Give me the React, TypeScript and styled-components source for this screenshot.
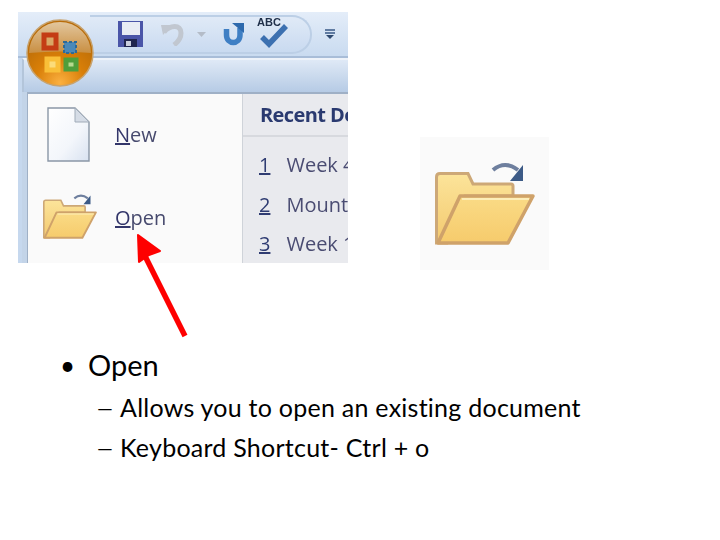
import React from 'react';
import styled, { createGlobalStyle } from 'styled-components';

const GlobalStyle = createGlobalStyle`
  html, body {
    margin: 0;
    padding: 0;
    background: #fff;
  }
`;

const FolderIcon: React.FC<{ width: number }> = ({ width }) => (
  <svg width={width} viewBox="0 0 100 83" style={{ display: 'block' }}>
    <defs>
      <linearGradient id="folderBack" x1="0" y1="0" x2="0" y2="1">
        <stop offset="0" stopColor="#fce49a" />
        <stop offset="1" stopColor="#f3c96f" />
      </linearGradient>
      <linearGradient id="folderFront" x1="0" y1="0" x2="0" y2="1">
        <stop offset="0" stopColor="#fadb86" />
        <stop offset="1" stopColor="#f6cb6c" />
      </linearGradient>
    </defs>
    <path
      d="M1.5 81 V15 Q1.5 11.5 5 11.5 H33 L38 22 H76 Q78 22 78 24 V34 H30 L12 81 Z"
      fill="url(#folderBack)"
      stroke="#cda877"
      strokeWidth="3"
    />
    <path d="M9 77 L25 36 H29 L13 77 Z" fill="#fff0bd" />
    <path
      d="M25 34 H98 L73 81 H3 Z"
      fill="url(#folderFront)"
      stroke="#cfa26a"
      strokeWidth="3.5"
      strokeLinejoin="round"
    />
    <path d="M27 37 H94" stroke="#fdeeb9" strokeWidth="2" />
    <path
      d="M58 8 Q70 -2 83 8"
      fill="none"
      stroke="#55698d"
      strokeWidth="4"
      opacity="0.85"
    />
    <path d="M88 3 V19 H75 Z" fill="#3c5a86" />
  </svg>
);

const OfficeOrb: React.FC = () => (
  <svg width="68" height="68" viewBox="0 0 68 68">
    <defs>
      <radialGradient id="orbBody" cx="0.5" cy="0.95" r="0.75">
        <stop offset="0" stopColor="#fbb040" />
        <stop offset="0.5" stopColor="#d97f08" />
        <stop offset="1" stopColor="#b96c08" />
      </radialGradient>
      <linearGradient id="orbTop" x1="0" y1="0" x2="0" y2="1">
        <stop offset="0" stopColor="#e2c69d" />
        <stop offset="1" stopColor="#c98f42" />
      </linearGradient>
    </defs>
    <circle cx="34" cy="34" r="33" fill="url(#orbBody)" stroke="#c7a36f" strokeWidth="1.5" />
    <path d="M3 34 A31 31 0 0 1 65 34 Q34 31 3 34 Z" fill="url(#orbTop)" />
    <rect x="18" y="16" width="12" height="13" fill="#d9a765" stroke="#c43c14" strokeWidth="5" />
    <rect x="38" y="23" width="12" height="11" fill="#4c89b8" stroke="#2f6a96" strokeWidth="2" strokeDasharray="3 2" />
    <rect x="21" y="40" width="11" height="11" fill="#fbdc7a" stroke="#f9bf38" strokeWidth="5" />
    <rect x="40" y="41" width="10" height="9" fill="#b7d98e" stroke="#4f9e3a" strokeWidth="5" />
  </svg>
);

const SaveIcon: React.FC = () => (
  <svg width="25" height="26" viewBox="0 0 25 26">
    <rect width="25" height="26" fill="#4a55a8" />
    <rect x="4" y="1" width="18" height="13" fill="#e8ecf4" />
    <rect x="6" y="18" width="13" height="8" fill="#20264f" />
    <rect x="8" y="20" width="5" height="5" fill="#c9cede" />
  </svg>
);

const UndoIcon: React.FC = () => (
  <svg width="25" height="24" viewBox="0 0 25 24">
    <path
      d="M4 10 C10 3 21 2 21 11 C21 17 18 20 14 23"
      fill="none"
      stroke="#c1c7d0"
      strokeWidth="5"
    />
    <path d="M1 3 L12 3 L3 13 Z" fill="#c1c7d0" />
  </svg>
);

const DropCaret: React.FC = () => (
  <svg width="9" height="5" viewBox="0 0 9 5">
    <path d="M0 0 H9 L4.5 5 Z" fill="#b4bcc8" />
  </svg>
);

const RedoIcon: React.FC = () => (
  <svg width="21" height="24" viewBox="0 0 21 24">
    <path
      d="M3.5 7 V13 C3.5 23 17 23 17 13 V6"
      fill="none"
      stroke="#3f7fc4"
      strokeWidth="5.5"
    />
    <path d="M9 1 H21 V11 Z" fill="#2d69ad" />
  </svg>
);

const SpellIcon: React.FC = () => (
  <svg width="33" height="28" viewBox="0 0 33 28">
    <path
      d="M6 17 L13 24 L30 6"
      fill="none"
      stroke="#3c70b0"
      strokeWidth="5.5"
    />
  </svg>
);

const CustomizeIcon: React.FC = () => (
  <svg width="10" height="10" viewBox="0 0 10 10">
    <path d="M0 1 H10 M0 4 H10" stroke="#3a5a86" strokeWidth="1.6" />
    <path d="M1 6 H9 L5 10 Z" fill="#2f4a70" />
  </svg>
);

const NewDocIcon: React.FC = () => (
  <svg width="43" height="55" viewBox="0 0 43 55">
    <defs>
      <linearGradient id="docFill" x1="0" y1="0" x2="1" y2="1">
        <stop offset="0" stopColor="#ffffff" />
        <stop offset="0.6" stopColor="#f3f6fb" />
        <stop offset="1" stopColor="#d8e2f0" />
      </linearGradient>
    </defs>
    <path d="M1 1 H28 L42 15 V54 H1 Z" fill="url(#docFill)" stroke="#8a97a6" strokeWidth="1.4" />
    <path d="M28 1 V15 H42 Z" fill="#d5dce6" stroke="#a0abb8" strokeWidth="1" />
  </svg>
);

const RedArrow: React.FC = () => (
  <ArrowOverlay viewBox="0 0 60 110" width="60" height="110">
    <path d="M55 104 L15 24" stroke="#fe0000" strokeWidth="5.5" />
    <path
      d="M8 3 L30 19 L19 23 L9 30 Z"
      fill="#fe0000"
      stroke="#fe0000"
      strokeWidth="2"
      strokeLinejoin="round"
    />
  </ArrowOverlay>
);

const App: React.FC = () => {
  return (
    <Slide>
      <GlobalStyle />
      <TopRow>
        <MenuShot>
          <TitleBar>
            <QuickAccess>
              <Tool $left={0}>
                <SaveIcon />
              </Tool>
              <Tool $left={17}>
                <UndoIcon />
              </Tool>
              <Tool $left={12}>
                <DropCaret />
              </Tool>
              <Tool $left={17}>
                <RedoIcon />
              </Tool>
              <SpellButton>
                <SpellLabel>ABC</SpellLabel>
                <SpellIcon />
              </SpellButton>
            </QuickAccess>
            <CustomizeIcon />
          </TitleBar>
          <Ribbon />
          <MenuBody>
            <Commands>
              <CommandRow>
                <CommandIcon $inset={25}>
                  <NewDocIcon />
                </CommandIcon>
                <CommandLabel>
                  <u>N</u>ew
                </CommandLabel>
              </CommandRow>
              <CommandRow $open>
                <CommandIcon $inset={18}>
                  <FolderIcon width={54} />
                </CommandIcon>
                <CommandLabel $raised>
                  <u>O</u>pen
                </CommandLabel>
              </CommandRow>
            </Commands>
            <Recent>
              <RecentTitle>Recent Documents</RecentTitle>
              <RecentList>
                <RecentItem>
                  <u>1</u>
                  <span>Week 4</span>
                </RecentItem>
                <RecentItem>
                  <u>2</u>
                  <span>Mountain</span>
                </RecentItem>
                <RecentItem>
                  <u>3</u>
                  <span>Week 1</span>
                </RecentItem>
              </RecentList>
            </Recent>
          </MenuBody>
          <OrbSlot>
            <OfficeOrb />
          </OrbSlot>
        </MenuShot>
        <FolderTile>
          <FolderIcon width={100} />
        </FolderTile>
      </TopRow>
      <RedArrow />
      <Bullets>
        <Bullet>Open</Bullet>
        <SubBullet>Allows you to open an existing document</SubBullet>
        <SubBullet>Keyboard Shortcut- Ctrl + o</SubBullet>
      </Bullets>
    </Slide>
  );
};

const Slide = styled.div`
  position: relative;
  width: 720px;
  height: 540px;
  overflow: hidden;
  background: #fff;
  padding: 12px 0 0 18px;
  box-sizing: border-box;
`;

const TopRow = styled.div`
  display: flex;
  align-items: flex-start;
  gap: 72px;
`;

const MenuShot = styled.div`
  position: relative;
  width: 330px;
  height: 251px;
  overflow: hidden;
  display: flex;
  flex-direction: column;
  filter: blur(0.35px);
  background: #c6d8ee;
`;

const TitleBar = styled.div`
  height: 44px;
  flex: none;
  display: flex;
  align-items: center;
  gap: 13px;
  padding-left: 72px;
  background: linear-gradient(#e4edf9, #c9dbf0);
  border-bottom: 2px solid #a8bdd8;
`;

const QuickAccess = styled.div`
  height: 39px;
  width: 222px;
  box-sizing: border-box;
  display: flex;
  align-items: center;
  padding-left: 28px;
  background: linear-gradient(#e0eaf7, #c9daf0);
  border: 2px solid #bccfe6;
  border-left: none;
  border-radius: 0 20px 20px 0 / 0 19px 19px 0;
`;

const Tool = styled.div<{ $left: number }>`
  display: flex;
  margin-left: ${(p) => p.$left}px;
`;

const SpellButton = styled.div`
  position: relative;
  width: 33px;
  height: 28px;
  margin-left: 12px;
`;

const SpellLabel = styled.span`
  position: absolute;
  left: 1px;
  top: -4px;
  font: bold 11px 'Liberation Sans', sans-serif;
  color: #20304a;
`;

const Ribbon = styled.div`
  height: 32px;
  flex: none;
  margin-left: 4px;
  border-top: 2px solid #eef3fa;
  border-left: 2px solid #b3c5da;
  background: linear-gradient(#dfe9f6, #b6cbe5);
`;

const MenuBody = styled.div`
  flex: 1;
  display: flex;
  margin-left: 9px;
  border-top: 2px solid #9fb0c6;
  border-left: 1px solid #9fb0c6;
  box-shadow: -5px 0 0 #c3d4e8;
  background: #fafafa;
`;

const Commands = styled.div`
  width: 215px;
  flex: none;
  padding-top: 13px;
  box-sizing: border-box;
  background: #fafafa;
  border-right: 1px solid #cfd3d9;
`;

const CommandRow = styled.div<{ $open?: boolean }>`
  display: flex;
  align-items: ${(p) => (p.$open ? 'flex-end' : 'center')};
  height: ${(p) => (p.$open ? '42px' : '55px')};
  margin-top: ${(p) => (p.$open ? '35px' : '0')};
`;

const CommandIcon = styled.div<{ $inset: number }>`
  width: 87px;
  flex: none;
  display: flex;
  justify-content: flex-end;
  padding-right: ${(p) => p.$inset}px;
  box-sizing: border-box;
`;

const CommandLabel = styled.span<{ $raised?: boolean }>`
  font: 20px/28px 'Open Sans', sans-serif;
  color: #474a6e;
  margin-bottom: ${(p) => (p.$raised ? '7px' : '0')};
  u {
    color: #33366a;
  }
`;

const Recent = styled.div`
  flex: 1;
  min-width: 0;
  background: #e9eaee;
  padding-left: 16px;
  overflow: hidden;
`;

const RecentTitle = styled.div`
  height: 41px;
  white-space: nowrap;
  margin-left: -16px;
  padding-left: 17px;
  font: bold 20px/41px 'Open Sans', sans-serif;
  letter-spacing: -0.6px;
  color: #2a3a70;
  border-bottom: 2px solid #d7d9de;
`;

const RecentList = styled.div`
  display: flex;
  flex-direction: column;
  padding-top: 14px;
  gap: 12px;
`;

const RecentItem = styled.div`
  display: flex;
  gap: 16px;
  white-space: nowrap;
  font: 20px/27.5px 'Open Sans', sans-serif;
  color: #4a4c72;
  u {
    color: #2f3c72;
  }
`;

const OrbSlot = styled.div`
  position: absolute;
  left: 8px;
  top: 7px;
`;

const FolderTile = styled.div`
  width: 129px;
  height: 133px;
  flex: none;
  margin-top: 125px;
  box-sizing: border-box;
  padding: 25px 0 0 15px;
  background: #fafafa;
  filter: blur(0.4px);
`;

const ArrowOverlay = styled.svg`
  position: absolute;
  left: 130px;
  top: 232px;
`;

const Bullets = styled.ul`
  list-style: none;
  margin: 78px 0 0;
  padding: 0;
  font-family: Lato, 'Liberation Sans', sans-serif;
  color: #000;
`;

const Bullet = styled.li`
  position: relative;
  padding-left: 70px;
  margin-bottom: 8px;
  font-size: 29px;
  line-height: 34px;
  &::before {
    content: '•';
    position: absolute;
    left: 42px;
    font-size: 26px;
  }
`;

const SubBullet = styled.li`
  position: relative;
  padding-left: 102px;
  margin-top: 6px;
  font-size: 25px;
  letter-spacing: 0.25px;
  line-height: 34px;
  &::before {
    content: '—';
    position: absolute;
    left: 79px;
    font-size: 20px;
  }
`;

export default App;
